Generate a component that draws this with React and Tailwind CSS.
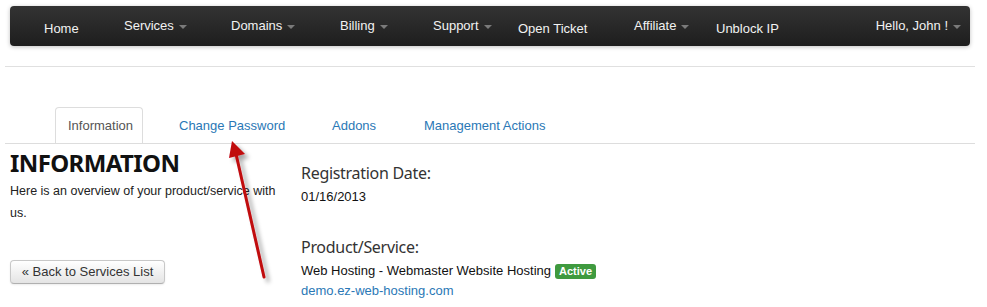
import React from "react";

const Caret = () => (
  <span className="ml-[5px] inline-block w-0 h-0 border-l-[4px] border-r-[4px] border-t-[4px] border-l-transparent border-r-transparent border-t-[#7a7a7a] mt-[2px]" />
);

function NavItem({ label, w, dropdown }) {
  return (
    <div
      className={`flex items-center shrink-0 ${dropdown ? "" : "pt-[5px]"}`}
      style={w ? { width: w } : undefined}
    >
      <span className="text-[13px] text-[#f2f2f2] leading-[16px]">{label}</span>
      {dropdown && <Caret />}
    </div>
  );
}

export default function App() {
  return (
    <div
      className="relative w-[987px] h-[307px] bg-white overflow-hidden"
      style={{ fontFamily: '"Liberation Sans", Arial, sans-serif' }}
    >
      <div className="w-[970px] ml-[5px]">
        {/* navbar */}
        <div className="mx-[5px] mt-[6px] h-[40px] rounded-[4px] bg-gradient-to-b from-[#333333] to-[#1e1e1e] shadow-[0_1px_4px_rgba(0,0,0,0.25)] flex items-stretch pl-[34px] pr-[9px]">
          <NavItem label="Home" w={80} />
          <NavItem label="Services" w={107} dropdown />
          <NavItem label="Domains" w={109} dropdown />
          <NavItem label="Billing" w={93} dropdown />
          <NavItem label="Support" w={85} dropdown />
          <NavItem label="Open Ticket" w={116} />
          <NavItem label="Affiliate" w={82} dropdown />
          <NavItem label="Unblock IP" />
          <div className="ml-auto flex">
            <NavItem label="Hello, John !" dropdown />
          </div>
        </div>

        <div className="mt-[20px] h-px bg-[#e0e0e0]" />

        {/* tabs */}
        <div className="mt-[40px] flex items-end border-b border-[#dddddd] pl-[50px]">
          <div className="w-[88px] shrink-0 border border-b-0 border-[#dddddd] rounded-t-[4px] pl-[12px] pt-[8px] pb-[7px] text-[13px] leading-[20px] text-[#555555]">
            Information
          </div>
          <div className="pt-[9px] pb-[7px] text-[13px] leading-[20px] text-[#2a78b6] w-[189px] pl-[36px] shrink-0">
            Change Password
          </div>
          <div className="pt-[9px] pb-[7px] text-[13px] leading-[20px] text-[#2a78b6] w-[92px] shrink-0">
            Addons
          </div>
          <div className="pt-[9px] pb-[7px] text-[13px] leading-[20px] text-[#2a78b6]">
            Management Actions
          </div>
        </div>

        {/* content */}
        <div className="flex">
          <div className="w-[296px] shrink-0 pl-[5px]">
            <div
              className="mt-[4px] text-[24px] leading-[30px] font-bold text-[#111111] tracking-[-0.6px]"
              style={{ fontFamily: '"Noto Sans", "Open Sans", sans-serif' }}
            >
              INFORMATION
            </div>
            <p className="mt-[2px] text-[12.5px] leading-[22px] text-[#222222] w-[276px]">
              Here is an overview of your product/service with us.
            </p>
            <button className="mt-[36px] h-[24px] w-[155px] px-[10px] rounded-[4px] border border-[#c8c8c8] border-b-[#b0b0b0] bg-gradient-to-b from-white to-[#e4e4e4] text-[13px] leading-[20px] text-[#333333] shadow-[0_1px_2px_rgba(0,0,0,0.08)] flex items-center justify-center">
              « Back to Services List
            </button>
          </div>
          <div className="flex-1">
            <div
              className="mt-[17px] text-[16px] leading-[24px] text-[#333333] tracking-[-0.3px]"
              style={{ fontFamily: '"Noto Sans", "Open Sans", sans-serif' }}
            >
              Registration Date:
            </div>
            <div className="mt-[2px] text-[13px] leading-[20px] text-[#111111]">01/16/2013</div>
            <div
              className="mt-[28px] text-[16px] leading-[24px] text-[#333333] tracking-[-0.3px]"
              style={{ fontFamily: '"Noto Sans", "Open Sans", sans-serif' }}
            >
              Product/Service:
            </div>
            <div className="mt-[2px] text-[13px] leading-[20px] text-[#111111] flex items-center">
              Web Hosting - Webmaster Website Hosting
              <span className="ml-[4px] h-[15px] px-[4px] rounded-[3px] bg-[#3f9a3f] text-white text-[11px] font-bold leading-[15px]">
                Active
              </span>
            </div>
            <div className="text-[13px] leading-[20px] text-[#2a78b6]">demo.ez-web-hosting.com</div>
          </div>
        </div>
      </div>

      {/* annotation arrow */}
      <svg className="absolute left-0 top-0 pointer-events-none" width="987" height="307" viewBox="0 0 987 307">
        <defs>
          <filter id="sh" x="-50%" y="-50%" width="200%" height="200%">
            <feDropShadow dx="4" dy="4" stdDeviation="2" floodColor="#000" floodOpacity="0.35" />
          </filter>
        </defs>
        <g filter="url(#sh)">
          <line x1="264" y1="277" x2="236" y2="154" stroke="#c0080d" strokeWidth="3" strokeLinecap="round" />
          <polygon points="232,141 229,158 245,154" fill="#c0080d" />
        </g>
      </svg>
    </div>
  );
}
